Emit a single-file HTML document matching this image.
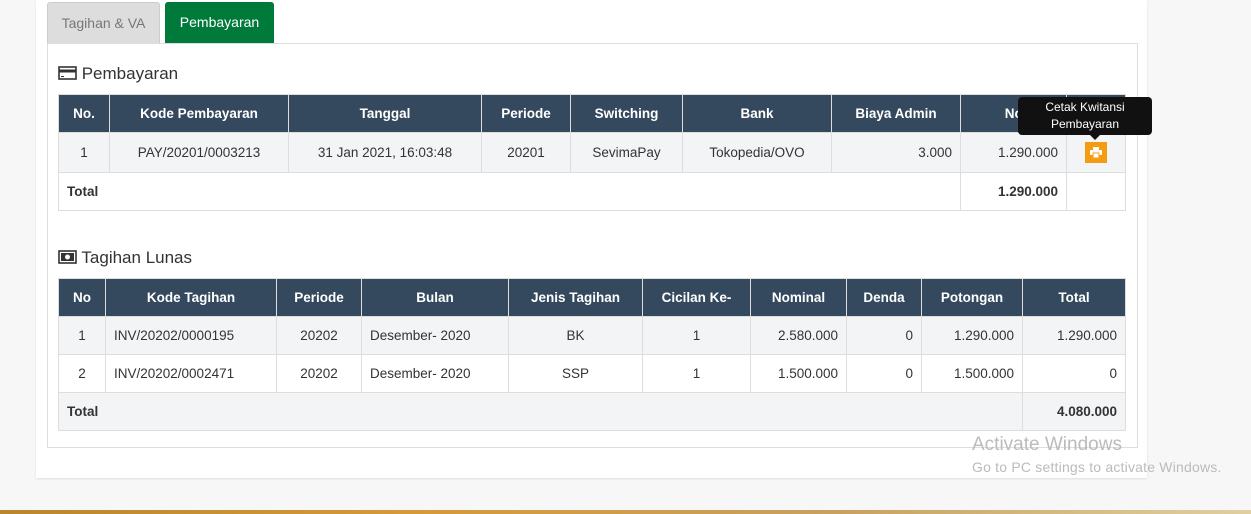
<!DOCTYPE html><html><head><style>
body{margin:0;width:1251px;height:514px;background:#f7f7f7;font-family:"Liberation Sans",sans-serif;position:relative;overflow:hidden;color:#333}
.card{position:absolute;left:36px;top:0;width:1111px;height:478px;background:#fff;box-shadow:0 1px 2px rgba(0,0,0,.1)}
.tab{position:absolute;top:2px;height:41px;line-height:41px;text-align:center;font-size:14px;border-radius:3px 3px 0 0}
.panel{position:absolute;left:47px;top:43px;width:1089px;height:403px;border:1px solid #ddd;border-top:1px solid #ddd}
h3{position:absolute;margin:0;font-weight:normal;font-size:17px;color:#333;left:58px}
table{position:absolute;left:58px;border-collapse:collapse;font-size:13.5px;table-layout:fixed}
th{background:#34495e;color:#fff;font-weight:bold;border:1px solid #ddd;height:37px;padding:0 8px}
td{border:1px solid #ddd;height:37px;padding:0 8px;text-align:center}
.r{text-align:right}.l{text-align:left}
.g td{background:#f3f4f6}
</style></head><body>
<div class="card"></div>
<div class="tab" style="left:47px;width:111px;background:#ddd;color:#777;border:1px solid #ccc;border-bottom:none">Tagihan &amp; VA</div>
<div class="tab" style="left:165px;width:109px;background:#007a3b;color:#fff">Pembayaran</div>
<div class="panel"></div>
<h3 style="top:64px"><svg width="19" height="14" viewBox="0 0 19 14" style="vertical-align:-1px"><rect x="1" y="1" width="17" height="12" fill="none" stroke="#333" stroke-width="1.6"/><rect x="1" y="3.5" width="17" height="3" fill="#333"/><rect x="3" y="10" width="3" height="1" fill="#333"/></svg> Pembayaran</h3>
<table style="top:94px;width:1067px">
<colgroup><col style="width:51px"><col style="width:179px"><col style="width:193px"><col style="width:89px"><col style="width:112px"><col style="width:149px"><col style="width:129px"><col style="width:106px"><col style="width:59px"></colgroup>
<tr><th>No.</th><th>Kode Pembayaran</th><th>Tanggal</th><th>Periode</th><th>Switching</th><th>Bank</th><th>Biaya Admin</th><th class="r">Nominal</th><th>Aksi</th></tr>
<tr class="g" style="height:40px"><td>1</td><td>PAY/20201/0003213</td><td>31 Jan 2021, 16:03:48</td><td>20201</td><td>SevimaPay</td><td>Tokopedia/OVO</td><td class="r">3.000</td><td class="r">1.290.000</td><td><span style="display:inline-block;width:22px;height:21px;background:#f39c12;vertical-align:middle;position:relative"><svg width="12" height="11" viewBox="0 0 12 11" style="position:absolute;left:5px;top:5px"><rect x="3" y="0" width="6" height="3" fill="#fff"/><rect x="0" y="3" width="12" height="5" rx="1" fill="#fff"/><rect x="3" y="6" width="6" height="5" fill="#fff" stroke="#f39c12" stroke-width="1"/></svg></span></td></tr>
<tr><td colspan="7" class="l"><b>Total</b></td><td class="r"><b>1.290.000</b></td><td></td></tr>
</table>
<div style="position:absolute;left:1018px;top:97px;width:134px;height:38px;background:#111;border-radius:4px;color:#fff;font-size:12px;text-align:center;line-height:17px;padding-top:2px;box-sizing:border-box">Cetak Kwitansi<br>Pembayaran</div>
<div style="position:absolute;left:1090px;top:135px;width:0;height:0;border:5px solid transparent;border-top-color:#111"></div>
<h3 style="top:248px"><svg width="19" height="14" viewBox="0 0 19 14" style="vertical-align:-1px"><rect x="1" y="1" width="17" height="12" fill="none" stroke="#333" stroke-width="1.6"/><rect x="3" y="3" width="13" height="8" fill="#333"/><circle cx="9.5" cy="7" r="2.5" fill="#fff"/></svg> Tagihan Lunas</h3>
<table style="top:278px;width:1067px">
<colgroup><col style="width:47px"><col style="width:171px"><col style="width:85px"><col style="width:147px"><col style="width:134px"><col style="width:108px"><col style="width:96px"><col style="width:75px"><col style="width:101px"><col style="width:103px"></colgroup>
<tr><th>No</th><th>Kode Tagihan</th><th>Periode</th><th>Bulan</th><th>Jenis Tagihan</th><th>Cicilan Ke-</th><th>Nominal</th><th>Denda</th><th>Potongan</th><th>Total</th></tr>
<tr class="g"><td>1</td><td class="l">INV/20202/0000195</td><td>20202</td><td class="l">Desember- 2020</td><td>BK</td><td>1</td><td class="r">2.580.000</td><td class="r">0</td><td class="r">1.290.000</td><td class="r">1.290.000</td></tr>
<tr><td>2</td><td class="l">INV/20202/0002471</td><td>20202</td><td class="l">Desember- 2020</td><td>SSP</td><td>1</td><td class="r">1.500.000</td><td class="r">0</td><td class="r">1.500.000</td><td class="r">0</td></tr>
<tr class="g"><td colspan="9" class="l"><b>Total</b></td><td class="r"><b>4.080.000</b></td></tr>
</table>
<div style="position:absolute;left:972px;top:434px;color:#bbb;font-size:19px">Activate Windows</div>
<div style="position:absolute;left:972px;top:459px;color:#bbb;font-size:14px;letter-spacing:0.2px">Go to PC settings to activate Windows.</div>
<div style="position:absolute;left:0;top:510px;width:1251px;height:4px;background:linear-gradient(90deg,#b8862e,#d49a3a,#c8a060,#e0cfa0)"></div>
</body></html>
